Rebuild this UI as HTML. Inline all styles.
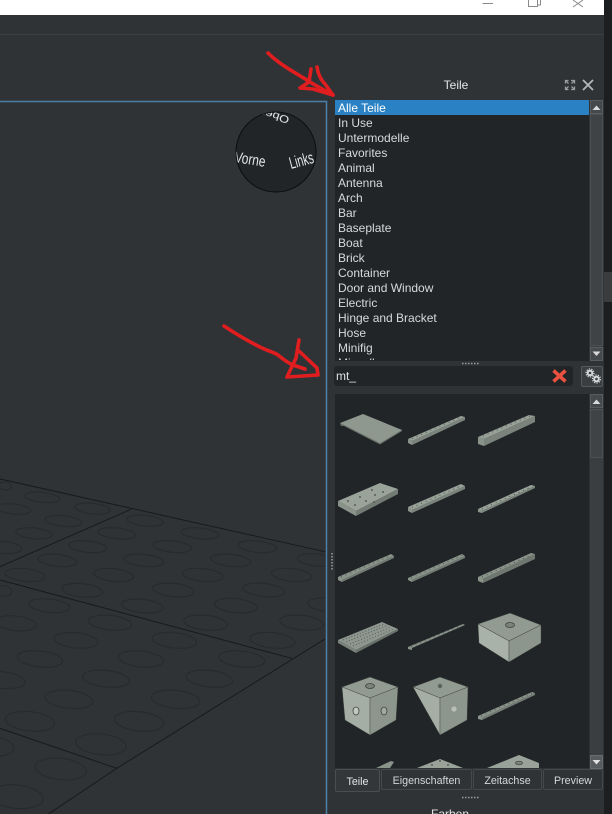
<!DOCTYPE html>
<html><head><meta charset="utf-8">
<style>
html{margin:0;padding:0;width:612px;height:814px;overflow:hidden;background:#2f3336}
body{margin:0;padding:0;width:612px;height:814px;position:relative;overflow:hidden;font-family:"Liberation Sans",sans-serif}
#w{position:absolute;left:0;top:0;width:612px;height:814px;overflow:hidden}
.a{position:absolute}
.it{position:absolute;left:338px;font-size:12px;line-height:15px;color:#d8dadb;white-space:nowrap}
.tab{position:absolute;top:769px;height:21px;font-size:10.7px;line-height:22px;color:#d5d7d8;text-align:center;border:1px solid #45494c;border-radius:2px;box-sizing:border-box;background:#2f3336}
</style></head><body><div id="w">
<div class="a" style="left:0;top:0;width:604px;height:15px;background:#fff"></div>
<div class="a" style="left:604px;top:0;width:8px;height:814px;background:#1d1e1f"></div>
<div class="a" style="left:604px;top:272px;width:8px;height:30px;background:#3a3c3e"></div>
<div class="a" style="left:0;top:34px;width:604px;height:1px;background:#3a3e41"></div>

<div class="a" style="left:335px;top:100px;width:254px;height:261px;background:#212528"></div>
<div class="a" style="left:335px;top:100px;width:254px;height:15px;background:#2a82c4"></div>
<div class="a" style="left:590px;top:100px;width:13px;height:261px;background:#3a3e41"></div>
<div class="a" style="left:334px;top:366px;width:239px;height:20px;background:#212528;border-radius:3px"></div>
<div class="a" style="left:581px;top:366px;width:22px;height:21px;background:#3a3e41;border:1px solid #55595c;box-sizing:border-box;border-radius:2px"></div>
<div class="a" style="left:335px;top:394px;width:254px;height:374px;background:#212528"></div>
<div class="a" style="left:590px;top:394px;width:13px;height:374px;background:#3a3e41"></div>

<div style="position:absolute;left:0;top:0;width:589px;height:360px;overflow:hidden">
<div class="it" style="top:101px;color:#fff">Alle Teile</div>
<div class="it" style="top:116px">In Use</div>
<div class="it" style="top:131px">Untermodelle</div>
<div class="it" style="top:146px">Favorites</div>
<div class="it" style="top:161px">Animal</div>
<div class="it" style="top:176px">Antenna</div>
<div class="it" style="top:191px">Arch</div>
<div class="it" style="top:206px">Bar</div>
<div class="it" style="top:221px">Baseplate</div>
<div class="it" style="top:236px">Boat</div>
<div class="it" style="top:251px">Brick</div>
<div class="it" style="top:266px">Container</div>
<div class="it" style="top:281px">Door and Window</div>
<div class="it" style="top:296px">Electric</div>
<div class="it" style="top:311px">Hinge and Bracket</div>
<div class="it" style="top:326px">Hose</div>
<div class="it" style="top:341px">Minifig</div>
<div class="it" style="top:356px">Miscellaneous</div>
</div>

<div class="a" style="left:416px;top:78px;width:80px;text-align:center;font-size:12px;line-height:15px;color:#e4e5e6">Teile</div>
<div class="a" style="left:336px;top:369px;font-size:12px;line-height:15px;color:#e0e1e2">mt_</div>

<div class="tab" style="left:335px;width:45px;height:23px;background:#33373a;border-color:#4a4e51;color:#e2e3e4;line-height:24px">Teile</div>
<div class="tab" style="left:381px;width:91px">Eigenschaften</div>
<div class="tab" style="left:473px;width:69px">Zeitachse</div>
<div class="tab" style="left:543px;width:60px">Preview</div>
<div class="a" style="left:410px;top:807px;width:80px;text-align:center;font-size:12px;line-height:15px;color:#e4e5e6">Farben</div>

<svg class="a" style="left:0;top:0" width="612" height="814" viewBox="0 0 612 814" xmlns="http://www.w3.org/2000/svg">
<defs>
<clipPath id="vp"><rect x="0" y="102" width="325" height="712"/></clipPath>
<clipPath id="ball"><circle cx="276" cy="152" r="39.5"/></clipPath>
<clipPath id="parts"><rect x="335" y="394" width="254" height="374"/></clipPath>
</defs>

<g stroke="#8a8a8a" stroke-width="1" fill="none">
<path d="M482.5 3.5H493"/>
<path d="M528.5 0V6.5H537.5V0M537.5 5H540.5V0"/>
<path d="M573 0L583 7M583 0L573 7"/>
</g>

<g clip-path="url(#vp)">
<g transform="translate(0 460) scale(.33333)" fill="none" stroke="#282b2e" stroke-width="3.6">
<ellipse cx="15" cy="78" rx="20" ry="12" transform="rotate(6 15 78)"/>
<ellipse cx="127" cy="112" rx="52" ry="15" transform="rotate(6 127 112)"/>
<ellipse cx="40" cy="147" rx="52" ry="15" transform="rotate(6 40 147)"/>
<ellipse cx="277" cy="146" rx="53" ry="16" transform="rotate(6 277 146)"/>
<ellipse cx="190" cy="183" rx="55" ry="16" transform="rotate(6 190 183)"/>
<ellipse cx="102" cy="220" rx="55" ry="16" transform="rotate(6 102 220)"/>
<ellipse cx="10" cy="262" rx="55" ry="18" transform="rotate(6 10 262)"/>
<ellipse cx="435" cy="182" rx="55" ry="16" transform="rotate(6 435 182)"/>
<ellipse cx="350" cy="220" rx="57" ry="16" transform="rotate(6 350 220)"/>
<ellipse cx="263" cy="260" rx="57" ry="17" transform="rotate(6 263 260)"/>
<ellipse cx="172" cy="301" rx="58" ry="18" transform="rotate(6 172 301)"/>
<ellipse cx="75" cy="345" rx="60" ry="19" transform="rotate(6 75 345)"/>
<ellipse cx="600" cy="220" rx="56" ry="16" transform="rotate(6 600 220)"/>
<ellipse cx="517" cy="260" rx="58" ry="17" transform="rotate(6 517 260)"/>
<ellipse cx="431" cy="301" rx="59" ry="18" transform="rotate(6 431 301)"/>
<ellipse cx="341" cy="345" rx="60" ry="19" transform="rotate(6 341 345)"/>
<ellipse cx="247" cy="391" rx="61" ry="20" transform="rotate(6 247 391)"/>
<ellipse cx="10" cy="393" rx="25" ry="16" transform="rotate(6 10 393)"/>
<ellipse cx="772" cy="260" rx="58" ry="17" transform="rotate(6 772 260)"/>
<ellipse cx="692" cy="301" rx="60" ry="18" transform="rotate(6 692 301)"/>
<ellipse cx="608" cy="345" rx="61" ry="19" transform="rotate(6 608 345)"/>
<ellipse cx="520" cy="390" rx="62" ry="20" transform="rotate(6 520 390)"/>
<ellipse cx="427" cy="438" rx="63" ry="20" transform="rotate(6 427 438)"/>
<ellipse cx="148" cy="437" rx="62" ry="20" transform="rotate(6 148 437)"/>
<ellipse cx="47" cy="490" rx="62" ry="22" transform="rotate(6 47 490)"/>
<ellipse cx="330" cy="488" rx="65" ry="22" transform="rotate(6 330 488)"/>
<ellipse cx="950" cy="300" rx="58" ry="18" transform="rotate(6 950 300)"/>
<ellipse cx="875" cy="345" rx="61" ry="19" transform="rotate(6 875 345)"/>
<ellipse cx="792" cy="390" rx="63" ry="20" transform="rotate(6 792 390)"/>
<ellipse cx="707" cy="437" rx="64" ry="21" transform="rotate(6 707 437)"/>
<ellipse cx="617" cy="488" rx="66" ry="22" transform="rotate(6 617 488)"/>
<ellipse cx="523" cy="541" rx="67" ry="23" transform="rotate(6 523 541)"/>
<ellipse cx="228" cy="541" rx="66" ry="23" transform="rotate(6 228 541)"/>
<ellipse cx="120" cy="597" rx="68" ry="24" transform="rotate(6 120 597)"/>
<ellipse cx="423" cy="597" rx="68" ry="24" transform="rotate(6 423 597)"/>
<ellipse cx="725" cy="597" rx="69" ry="24" transform="rotate(6 725 597)"/>
<ellipse cx="905" cy="488" rx="66" ry="22" transform="rotate(6 905 488)"/>
<ellipse cx="985" cy="435" rx="62" ry="20" transform="rotate(6 985 435)"/>
<ellipse cx="817" cy="541" rx="68" ry="23" transform="rotate(6 817 541)"/>
<ellipse cx="628" cy="656" rx="70" ry="25" transform="rotate(6 628 656)"/>
<ellipse cx="318" cy="656" rx="70" ry="25" transform="rotate(6 318 656)"/>
<ellipse cx="5" cy="660" rx="70" ry="25" transform="rotate(6 5 660)"/>
<ellipse cx="207" cy="718" rx="72" ry="27" transform="rotate(6 207 718)"/>
<ellipse cx="527" cy="718" rx="73" ry="27" transform="rotate(6 527 718)"/>
<ellipse cx="418" cy="784" rx="74" ry="29" transform="rotate(6 418 784)"/>
<ellipse cx="90" cy="784" rx="74" ry="29" transform="rotate(6 90 784)"/>
<ellipse cx="303" cy="853" rx="76" ry="31" transform="rotate(6 303 853)"/>
<ellipse cx="-30" cy="858" rx="72" ry="30" transform="rotate(6 -30 858)"/>
<ellipse cx="182" cy="927" rx="77" ry="32" transform="rotate(6 182 927)"/>
<ellipse cx="50" cy="1010" rx="80" ry="35" transform="rotate(6 50 1010)"/>
<path d="M0 57L975 275M395 147L0 320M0 360L875 595M975 537L350 925L145 1062M0 805L350 925" stroke="#17191b" stroke-width="2.8"/>
</g>
</g>
<path d="M0 101.5H326.5V814" fill="none" stroke="#4a7fa6" stroke-width="1.5"/>

<circle cx="276" cy="152" r="40" fill="#222528" stroke="#0c0d0e" stroke-width="1"/>
<g clip-path="url(#ball)" font-family="Liberation Sans,sans-serif" fill="#e6e7e8">
<text transform="translate(234 162) rotate(9) scale(.85 1.1)" font-size="14">Vorne</text>
<text transform="translate(291 169) rotate(-15) scale(.75 1.2)" font-size="14">Links</text>
<text transform="translate(290 117) rotate(197) scale(1 .8)" font-size="13">Oben</text>
</g>

<g fill="none" stroke="#9a9da0" stroke-width="1.3">
<path d="M565.5 83.5V80.5H568.5M571 80.5H574.5V83.5M565.5 86.5V89.5H568.5M571 89.5H574.5V86.5"/>
<path d="M566 81L568.5 83.5M574 81L571.5 83.5M566 89L568.5 86.5M574 89L571.5 86.5"/>
<path d="M583 80L593 90M593 80L583 90" stroke="#b4b6b8" stroke-width="1.8"/>
</g>

<rect x="590.5" y="100.5" width="12" height="13" fill="#45494c" stroke="#585c5f"/>
<path d="M592.5 110H600.5L596.5 105.5Z" fill="#d8d8d8"/>
<rect x="590.5" y="347.5" width="12" height="13" fill="#45494c" stroke="#585c5f"/>
<path d="M592.5 351.5H600.5L596.5 356Z" fill="#d8d8d8"/>
<rect x="590.5" y="114.5" width="12" height="231" fill="#3f4346" stroke="#4c5053"/>
<rect x="590.5" y="394.5" width="12" height="13" fill="#45494c" stroke="#585c5f"/>
<path d="M592.5 404H600.5L596.5 399.5Z" fill="#d8d8d8"/>
<rect x="590.5" y="409.5" width="12" height="48" fill="#3f4346" stroke="#4c5053"/>
<rect x="590.5" y="755.5" width="12" height="13" fill="#585c5f" stroke="#686c6f"/>
<path d="M592.5 760H600.5L596.5 764.5Z" fill="#e0e0e0"/>

<path d="M462 363.5H479M462 797.5H479" stroke="#9a9da0" stroke-width="1.5" stroke-dasharray="1.5 1.5"/>
<path d="M332 553V570" stroke="#9a9da0" stroke-width="1.5" stroke-dasharray="1.5 1.5"/>

<path d="M553.5 370.5L565.5 381.5M565.5 370.5L553.5 381.5" stroke="#e8503f" stroke-width="3.6"/>

<g fill="none" stroke="#d4d6d8">
<circle cx="590" cy="373" r="2.3" stroke-width="2"/>
<circle cx="590" cy="373" r="4" stroke-width="1.2" stroke-dasharray="1.3 1.2"/>
<circle cx="596.5" cy="379" r="2.3" stroke-width="2"/>
<circle cx="596.5" cy="379" r="4" stroke-width="1.2" stroke-dasharray="1.3 1.2"/>
</g>

<g clip-path="url(#parts)" stroke-linejoin="round">
<path d="M340 423L363 414L402 430L380 444Z" fill="#8e988f"/>
<path d="M340 423L341 426L344 426L380 444.5L402 431L402 430L380 443Z" fill="#6a736b"/>
<path d="M408 439L461 416L465 417L412 441Z" fill="#98a198"/>
<path d="M408 439L412 441V445L408 443Z" fill="#8a938a"/>
<path d="M412 441L465 417V420L412 445Z" fill="#7b847c"/>
<path d="M478 437L529 415L535 416L484 439Z" fill="#98a198"/>
<path d="M478 437L484 439V446L478 444Z" fill="#8a938a"/>
<path d="M484 439L535 416V422L484 446Z" fill="#7b847c"/>
<path d="M408 507L461 484L465 486L412 510Z" fill="#98a198"/>
<path d="M408 507L412 510V513L408 511Z" fill="#8a938a"/>
<path d="M412 510L465 486V489L412 513Z" fill="#7b847c"/>
<path d="M478 509L531 485L535 486L482 511Z" fill="#98a198"/>
<path d="M478 509L482 511V513L478 512Z" fill="#8a938a"/>
<path d="M482 511L535 486V488L482 513Z" fill="#7b847c"/>
<path d="M338 577L391 554L394 556L342 580V582L338 580Z" fill="#8a938a"/>
<path d="M342 580L394 556V558L342 582Z" fill="#747d75"/>
<path d="M408 578L462 554L465 556L412 580V582L408 580Z" fill="#8a938a"/>
<path d="M412 580L465 556V558L412 582Z" fill="#747d75"/>
<path d="M478 577L531 553L535 554L483 579V583L478 581Z" fill="#8a938a"/>
<path d="M483 579L535 554V559L483 583Z" fill="#6f7870"/>
<path d="M408 647L463 624L465 625L412 648V650L408 649Z" fill="#8a938a"/>
<path d="M478 716L532 692L535 693L482 718V720L478 719Z" fill="#8a938a"/>
<path d="M482 718L535 693V695L482 720Z" fill="#747d75"/>
<path d="M376 768L391 761L394 762L390 768Z" fill="#8a938a"/>
<g stroke="#4e564f" stroke-width="1" stroke-dasharray="1 4" fill="none">
<path d="M412 438.5L461 417"/><path d="M483 436L530 416"/><path d="M412 507.5L461 486"/><path d="M482 509L531 487"/>
<path d="M341 577L391 555.5"/><path d="M411 578L462 555.5"/><path d="M482 577L531 555"/><path d="M411 647L462 625"/><path d="M481 716L532 693"/>
</g>
<path d="M338 501L380 483L398 489L356 511Z" fill="#9aa39a"/>
<path d="M338 501L356 511V516L338 506Z" fill="#8a938a"/>
<path d="M356 511L398 489V494L356 516Z" fill="#737c74"/>
<g fill="#555d56"><circle cx="348" cy="501" r="1"/><circle cx="360" cy="497" r="1"/><circle cx="372" cy="490" r="1"/><circle cx="366" cy="501" r="1"/><circle cx="375" cy="495" r="1"/><circle cx="383" cy="492" r="1"/><circle cx="355" cy="505" r="1"/><circle cx="374" cy="502" r="1"/></g>
<path d="M338 640L382 622L398 629L356 650Z" fill="#8e978f"/>
<path d="M338 640L356 650V653L338 643Z" fill="#7b847c"/>
<path d="M356 650L398 629V631L356 653Z" fill="#6a736b"/>
<path d="M343 640L384 624M346 642L388 625M350 644L391 627M353 646L394 629" stroke="#565e57" stroke-width="1" stroke-dasharray="1 2" fill="none"/>
<path d="M478 624L510 613L541 625L509 641Z" fill="#919b92" stroke="#3d433e" stroke-width=".6"/>
<path d="M478 624L509 641V662L479 643Z" fill="#a9b2a9" stroke="#3d433e" stroke-width=".4"/>
<path d="M509 641L541 625V643L509 662Z" fill="#8d968d" stroke="#3d433e" stroke-width=".4"/>
<ellipse cx="510" cy="625" rx="4.5" ry="2.5" fill="#7a837b" stroke="#3d433e" stroke-width=".8"/>
<path d="M342 687L370 677L398 687L370 698Z" fill="#919b92" stroke="#3d433e" stroke-width=".6"/>
<path d="M342 687L370 698V735L345 720Z" fill="#a5aea5" stroke="#3d433e" stroke-width=".4"/>
<path d="M370 698L398 687L396 720L370 735Z" fill="#8d968d" stroke="#3d433e" stroke-width=".4"/>
<ellipse cx="370" cy="686" rx="4.5" ry="2.5" fill="#7a837b" stroke="#3d433e" stroke-width=".8"/>
<ellipse cx="356" cy="711" rx="3" ry="4" fill="#c2c9c2" stroke="#3d433e" stroke-width=".8"/>
<ellipse cx="384" cy="711" rx="3" ry="4" fill="#a0a9a0" stroke="#3d433e" stroke-width=".8"/>
<path d="M413 687L440 677L468 687L440 698Z" fill="#919b92" stroke="#3d433e" stroke-width=".6"/>
<path d="M413 687L440 698V735Z" fill="#a5aea5" stroke="#3d433e" stroke-width=".4"/>
<path d="M440 698L468 687L467 720L440 735Z" fill="#8d968d" stroke="#3d433e" stroke-width=".4"/>
<circle cx="440" cy="686" r="2.2" fill="#5b645c"/>
<circle cx="454" cy="709" r="2.6" fill="#b8bfb8"/>
<path d="M417 768L440 759L463 768Z" fill="#9aa39a"/>
<g fill="#444b45"><circle cx="440" cy="761" r=".9"/><circle cx="432" cy="765" r=".9"/><circle cx="448" cy="765" r=".9"/></g>
<path d="M487 768L519 755L539 763V768Z" fill="#9aa39a"/>
<ellipse cx="519" cy="763" rx="3.5" ry="1.8" fill="#7a837b" stroke="#3d433e" stroke-width=".7"/>
</g>

<g fill="none" stroke="#e01d1f" stroke-width="3.6" stroke-linecap="round" stroke-linejoin="round">
<path d="M268 53C280 65 296 73 310 82C318 87 326 91 333 95"/>
<path d="M311 69L309 82L300 88L313 89L333 95"/>
<path d="M317 67C318 74 321 80 325 84L333 95"/>
<path d="M224 326C236 334 248 341 260 347C268 351 273 352 278 355C284 360 288 363 293 365L305 369"/>
<path d="M299 340L296 358L287 377L318 375L317 368L299 351"/>
</g>
</svg>
</div></body></html>
